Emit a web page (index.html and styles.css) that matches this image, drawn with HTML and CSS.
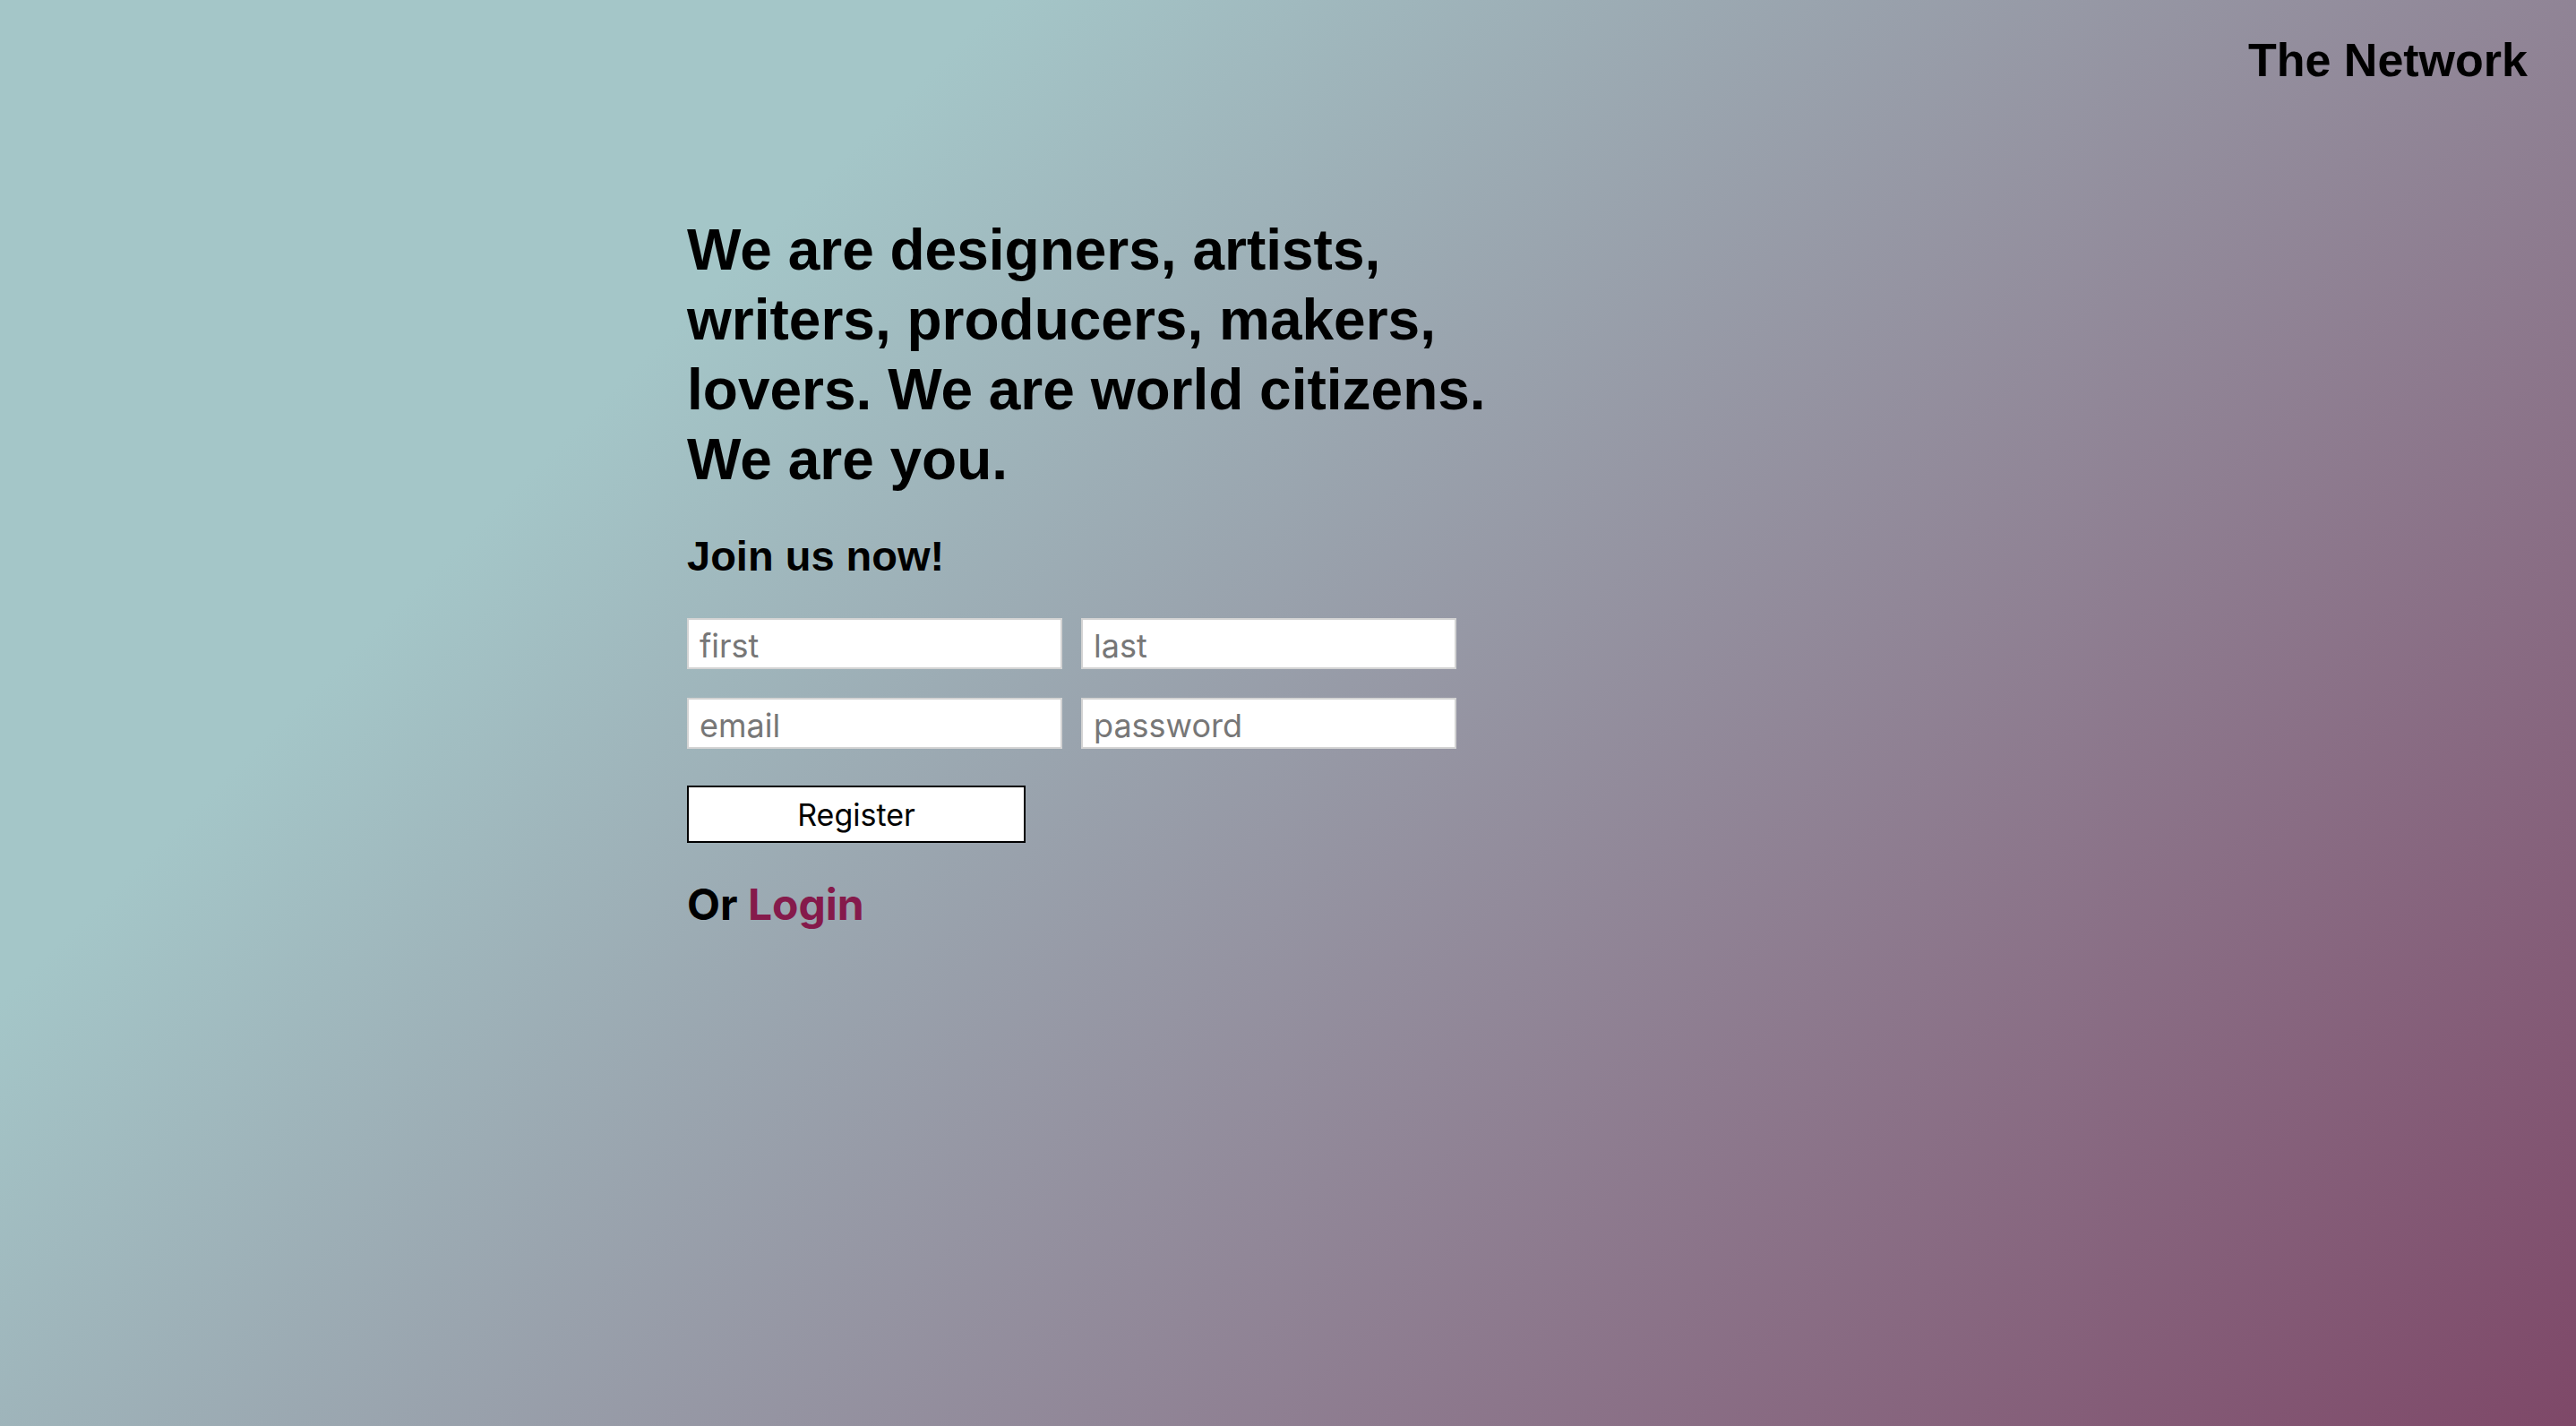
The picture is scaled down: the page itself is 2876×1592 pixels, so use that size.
FILE: index.html
```html
<!DOCTYPE html>
<html lang="en">
<head>
<meta charset="utf-8">
<title>The Network</title>
<link rel="stylesheet" href="styles.css">
</head>
<body>
<div class="page">
  <header class="topbar">
    <div class="brand">The Network</div>
  </header>
  <main class="content">
    <h1 class="headline">We are designers, artists, writers, producers, makers, lovers. We are world citizens. We are you.</h1>
    <h2 class="join">Join us now!</h2>
    <form class="form">
      <div class="fields">
        <input class="field" type="text" placeholder="first">
        <input class="field" type="text" placeholder="last">
        <input class="field" type="email" placeholder="email">
        <input class="field" type="password" placeholder="password">
      </div>
      <button class="register" type="button">Register</button>
    </form>
    <p class="alt">Or <a class="login" href="#">Login</a></p>
  </main>
</div>
</body>
</html>
```
FILE: styles.css
```css
html, body {
  margin: 0;
  padding: 0;
}
body {
  min-height: 100vh;
  background: linear-gradient(135deg, #a4c6c8 25%, #7e4868 100%);
  font-family: "Liberation Sans", Arial, sans-serif;
  color: #000;
}
.page {
  min-height: 100vh;
  display: flex;
  flex-direction: column;
}
.topbar {
  display: flex;
  justify-content: flex-end;
  padding: 37px 54px 0 0;
}
.brand {
  font-weight: 700;
  font-size: 52px;
  line-height: 60px;
}
.content {
  display: flex;
  flex-direction: column;
  align-items: flex-start;
  padding-left: 767px;
  margin-top: 143px;
}
.headline {
  margin: 0;
  width: 940px;
  font-size: 64px;
  line-height: 78px;
  font-weight: 700;
}
.join {
  margin: 43px 0 0;
  font-size: 47px;
  line-height: 52px;
  font-weight: 700;
}
.form {
  margin-top: 43px;
  display: flex;
  flex-direction: column;
  align-items: flex-start;
  gap: 41px;
}
.fields {
  display: grid;
  grid-template-columns: 419px 419px;
  column-gap: 21px;
  row-gap: 32px;
}
.field {
  box-sizing: border-box;
  width: 419px;
  height: 57px;
  margin: 0;
  padding: 4px 12px 0;
  border: 2px solid #d3d3d3;
  background: #fff;
  font-family: "Inter", "Noto Sans", sans-serif;
  font-size: 36px;
  color: #222;
  outline: none;
}
.field::placeholder {
  color: #777;
}
.register {
  box-sizing: border-box;
  width: 378px;
  height: 64px;
  margin: 0;
  padding: 0;
  border: 2px solid #000;
  background: #fff;
  font-family: "Inter", "Noto Sans", sans-serif;
  font-size: 34px;
  color: #000;
}
.alt {
  margin: 40px 0 0;
  font-family: "Inter", "Noto Sans", sans-serif;
  font-weight: 700;
  font-size: 48px;
  line-height: 58px;
}
.login {
  color: #851a4b;
  text-decoration: none;
}
```
